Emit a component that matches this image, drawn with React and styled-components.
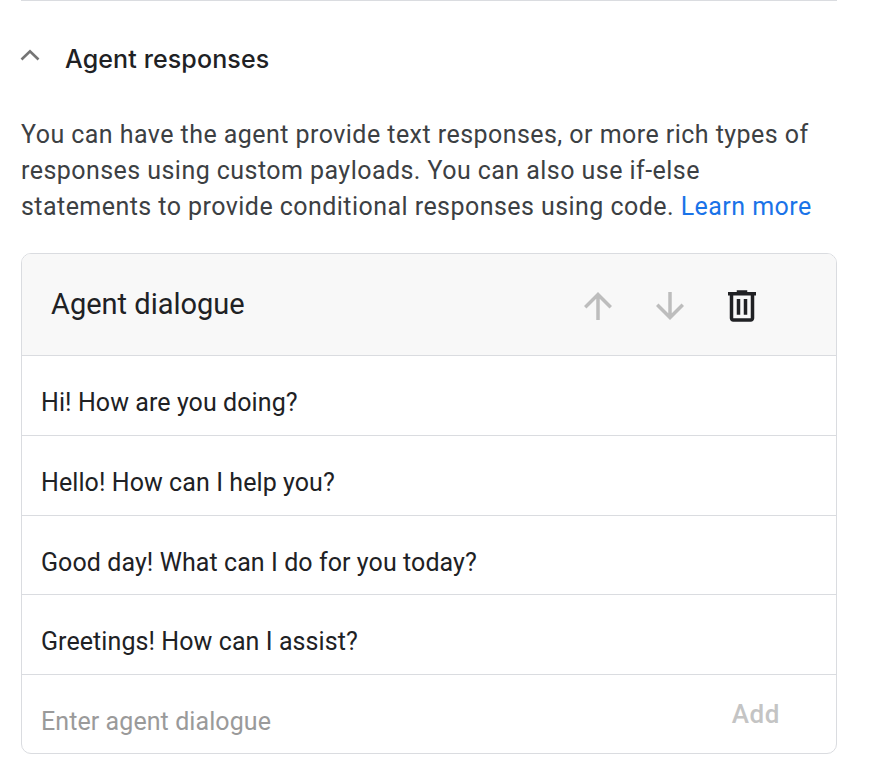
import React from "react";
import styled, { createGlobalStyle } from "styled-components";

const GlobalStyle = createGlobalStyle`
  html, body {
    margin: 0;
    padding: 0;
    background: #fff;
    overflow: hidden;
  }
`;

const Page = styled.div`
  width: 880px;
  height: 774px;
  box-sizing: border-box;
  padding: 0 43px 0 21px;
  font-family: Roboto, "Liberation Sans", sans-serif;
  color: #202124;
`;

const Divider = styled.div`
  height: 1px;
  background: #dadce0;
`;

const SectionHead = styled.div`
  display: flex;
  align-items: center;
  height: 26px;
  margin-top: 45px;
`;

const Chevron = styled.svg`
  width: 20px;
  height: 12px;
  margin: -8px 25px 0 -1px;
  flex: none;
`;

const SectionTitle = styled.h2`
  margin: 0;
  font-family: Inter, Roboto, sans-serif;
  font-size: 25px;
  font-weight: 500;
  line-height: 26px;
  letter-spacing: 0.12px;
  color: #202124;
`;

const Intro = styled.p`
  margin: 45px 0 0;
  max-width: 800px;
  font-size: 25px;
  line-height: 36px;
  letter-spacing: 0.45px;
  color: #3c4043;
`;

const LearnMore = styled.a`
  color: #1a73e8;
  text-decoration: none;
`;

const Card = styled.div`
  margin-top: 28px;
  height: 501px;
  box-sizing: border-box;
  border: 1px solid #dadce0;
  border-radius: 10px;
  overflow: hidden;
`;

const CardHead = styled.div`
  display: flex;
  align-items: center;
  height: 102px;
  box-sizing: border-box;
  padding: 0 0 2px 29px;
  background: #f8f8f8;
  border-bottom: 1px solid #dadce0;
`;

const CardTitle = styled.div`
  flex: 1;
  font-size: 29px;
`;

const Tools = styled.div`
  display: flex;
  align-items: center;
  gap: 30px;
  margin: 4px 73px 0 0;
`;

const ToolIcon = styled.svg`
  width: 42px;
  height: 42px;
  display: block;
  fill: ${(p) => (p.$off ? "#bdbdbd" : "#202124")};
`;

const Row = styled.div`
  height: 79.75px;
  box-sizing: border-box;
  padding: 29px 19px 0;
  border-bottom: 1px solid #dadce0;
  font-size: 25px;
  line-height: 36px;
  letter-spacing: 0.08px;
`;

const EntryRow = styled.div`
  display: flex;
  justify-content: space-between;
  padding: 29px 56px 0 19px;
`;

const Placeholder = styled.span`
  font-size: 25px;
  line-height: 36px;
  letter-spacing: 0.08px;
  color: #9a9a9a;
`;

const AddButton = styled.span`
  margin-top: -4px;
  font-size: 26px;
  font-weight: 500;
  line-height: 28px;
  letter-spacing: 0.6px;
  color: #c4c4c4;
`;

const lines = [
  "Hi! How are you doing?",
  "Hello! How can I help you?",
  "Good day! What can I do for you today?",
  "Greetings! How can I assist?",
];

export default function App() {
  return (
    <>
      <GlobalStyle />
      <Page>
        <Divider />
        <SectionHead>
          <Chevron viewBox="0 0 20 12">
            <path d="M1.5 10.5 10 2.2l8.5 8.3" fill="none" stroke="#757575" strokeWidth="2.6" />
          </Chevron>
          <SectionTitle>Agent responses</SectionTitle>
        </SectionHead>
        <Intro>
          You can have the agent provide text responses, or more rich types of responses using custom
          payloads. You can also use if-else statements to provide conditional responses using code.{" "}
          <LearnMore href="#">Learn more</LearnMore>
        </Intro>
        <Card>
          <CardHead>
            <CardTitle>Agent dialogue</CardTitle>
            <Tools>
              <ToolIcon $off viewBox="0 0 24 24">
                <path d="M4 12l1.41 1.41L11 7.83V20h2V7.83l5.58 5.59L20 12l-8-8-8 8z" />
              </ToolIcon>
              <ToolIcon $off viewBox="0 0 24 24">
                <path d="M20 12l-1.41-1.41L13 16.17V4h-2v12.17l-5.58-5.59L4 12l8 8 8-8z" />
              </ToolIcon>
              <ToolIcon viewBox="0 0 24 24">
                <path d="M15 4V3H9v1H4v2h1v13c0 1.1.9 2 2 2h10c1.1 0 2-.9 2-2V6h1V4h-5zm2 15H7V6h10v13z" />
                <path d="M9 8h2v9H9zm4 0h2v9h-2z" />
              </ToolIcon>
            </Tools>
          </CardHead>
          {lines.map((line) => (
            <Row key={line}>{line}</Row>
          ))}
          <EntryRow>
            <Placeholder>Enter agent dialogue</Placeholder>
            <AddButton>Add</AddButton>
          </EntryRow>
        </Card>
      </Page>
    </>
  );
}
